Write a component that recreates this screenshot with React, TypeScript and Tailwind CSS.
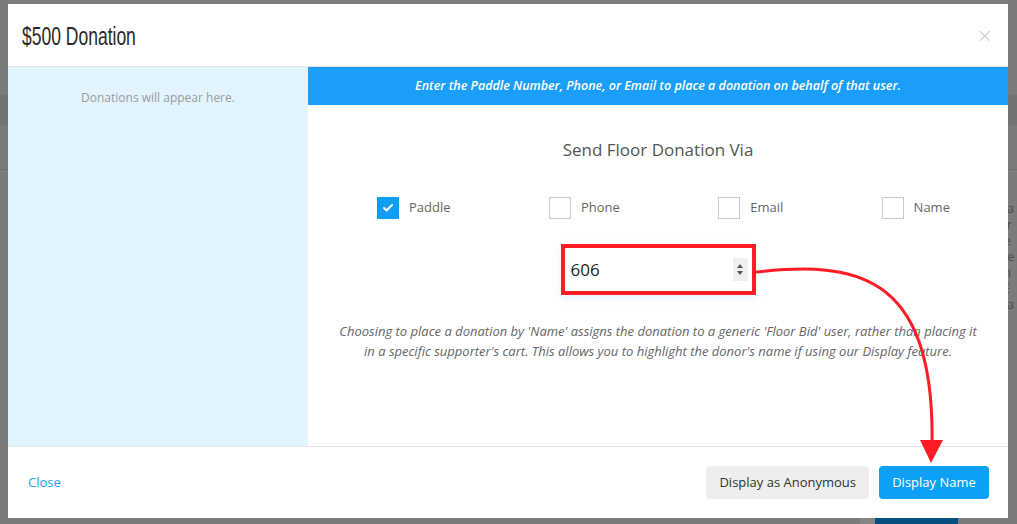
import { Check } from "lucide-react";

const options = [
  { label: "Paddle", checked: true },
  { label: "Phone", checked: false },
  { label: "Email", checked: false },
  { label: "Name", checked: false },
];

// bits of the page that peek out from behind the modal
const peekLines = ["pa", "or", "te", "ne", "m", " E", "ha"];

const App = () => {
  return (
    <div className="relative w-[1017px] h-[524px] overflow-hidden bg-[#7b7b7b] font-['Open_Sans',sans-serif]">
      {/* Page behind the overlay */}
      <div className="absolute inset-0">
        <div className="absolute left-0 right-0 top-[95px] h-[30px] bg-[#737373]" />
        <div className="absolute left-0 right-0 top-[169px] h-px bg-[#6e6e6e]" />
        <div className="absolute left-[999px] top-[200px] flex flex-col text-[13px] leading-[16px] text-[#4f4f4f] whitespace-pre">
          {peekLines.map((t, i) => (
            <span key={i}>{t}</span>
          ))}
        </div>
        <div className="absolute left-[860px] top-[518px] w-[15px] h-[6px] bg-[#858585]" />
        <div className="absolute left-[875px] top-[518px] w-[83px] h-[6px] bg-[#064e7f]" />
      </div>

      {/* Modal */}
      <div className="absolute left-[8px] top-[4px] w-[1000px] h-[514px] bg-white flex flex-col">
        {/* Header */}
        <div className="h-[63px] shrink-0 border-b border-[#e5e5e5] flex items-center justify-between pl-[14px] pr-[15px]">
          <h4 className="font-['Liberation_Sans',sans-serif] text-[25px] text-[#2a2a2a] origin-left scale-x-[0.7] pt-[4px] whitespace-nowrap">
            $500 Donation
          </h4>
          <span className="text-[20px] leading-none text-[#c9c9c9] font-['DejaVu_Sans',sans-serif] font-light">×</span>
        </div>

        {/* Body */}
        <div className="flex-1 flex min-h-0">
          <div className="w-[300px] shrink-0 bg-[#e1f3fd] pt-[21px] text-center text-[12px] leading-[20px] text-[#9b9b9b]">
            Donations will appear here.
          </div>

          <div className="flex-1 flex flex-col">
            <div className="h-[38px] bg-[#1a9ef9] flex items-center justify-center text-[12.5px] italic font-semibold text-white">
              Enter the Paddle Number, Phone, or Email to place a donation on behalf of that user.
            </div>

            <div className="mt-[33px] text-center text-[17px] leading-[24px] text-[#555]">
              Send Floor Donation Via
            </div>

            {/* Options */}
            <div className="mt-[35px] flex justify-between pl-[69px] pr-[58px]">
              {options.map((o) => (
                <label key={o.label} className="flex items-center gap-[10px]">
                  {o.checked ? (
                    <span className="w-[22px] h-[22px] bg-[#0d9df3] flex items-center justify-center">
                      <Check size={12} strokeWidth={4} className="text-white" />
                    </span>
                  ) : (
                    <span className="w-[22px] h-[22px] border border-[#c9c9c9] bg-white" />
                  )}
                  <span className="text-[13px] text-[#666]">{o.label}</span>
                </label>
              ))}
            </div>

            {/* Paddle number field */}
            <div className="mt-[25px] mx-auto w-[195px] h-[51px] border-[4px] border-[#ff1c24] bg-white shadow-[0_3px_8px_rgba(40,140,230,0.12)] flex items-center pl-[6px] pr-[4px]">
              <span className="text-[17px] text-[#222]">606</span>
              <span className="ml-auto w-[15px] h-[23px] bg-[#efefef] flex flex-col items-center justify-center gap-[3px]">
                <span className="w-0 h-0 border-l-[3px] border-r-[3px] border-b-[4px] border-l-transparent border-r-transparent border-b-[#555]" />
                <span className="w-0 h-0 border-l-[3px] border-r-[3px] border-t-[4px] border-l-transparent border-r-transparent border-t-[#555]" />
              </span>
            </div>

            <p className="mt-[26px] text-center text-[13px] leading-[20px] italic text-[#666] whitespace-nowrap">
              Choosing to place a donation by 'Name' assigns the donation to a generic 'Floor Bid' user, rather than placing it
              <br />
              in a specific supporter's cart. This allows you to highlight the donor's name if using our Display feature.
            </p>
          </div>
        </div>

        {/* Footer */}
        <div className="h-[72px] shrink-0 border-t border-[#e5e5e5] flex items-center pl-[20px] pr-[19px]">
          <a className="text-[13px] text-[#1a9ef5]">Close</a>
          <div className="ml-auto flex gap-[10px]">
            <button className="h-[33px] px-[13px] rounded-[4px] bg-[#eeeeee] text-[13px] text-[#333]">
              Display as Anonymous
            </button>
            <button className="h-[33px] w-[110px] rounded-[4px] bg-[#0ea0f5] text-[13px] text-white">
              Display Name
            </button>
          </div>
        </div>
      </div>

      {/* Annotation arrow */}
      <svg className="absolute inset-0 pointer-events-none" width="1017" height="524" viewBox="0 0 1017 524">
        <path d="M 756 272 C 850 262, 935 268, 932 444" fill="none" stroke="#ff1c24" strokeWidth="3" />
        <polygon points="920,440 943,440 931,463" fill="#ff1c24" />
      </svg>
    </div>
  );
};

export default App;
